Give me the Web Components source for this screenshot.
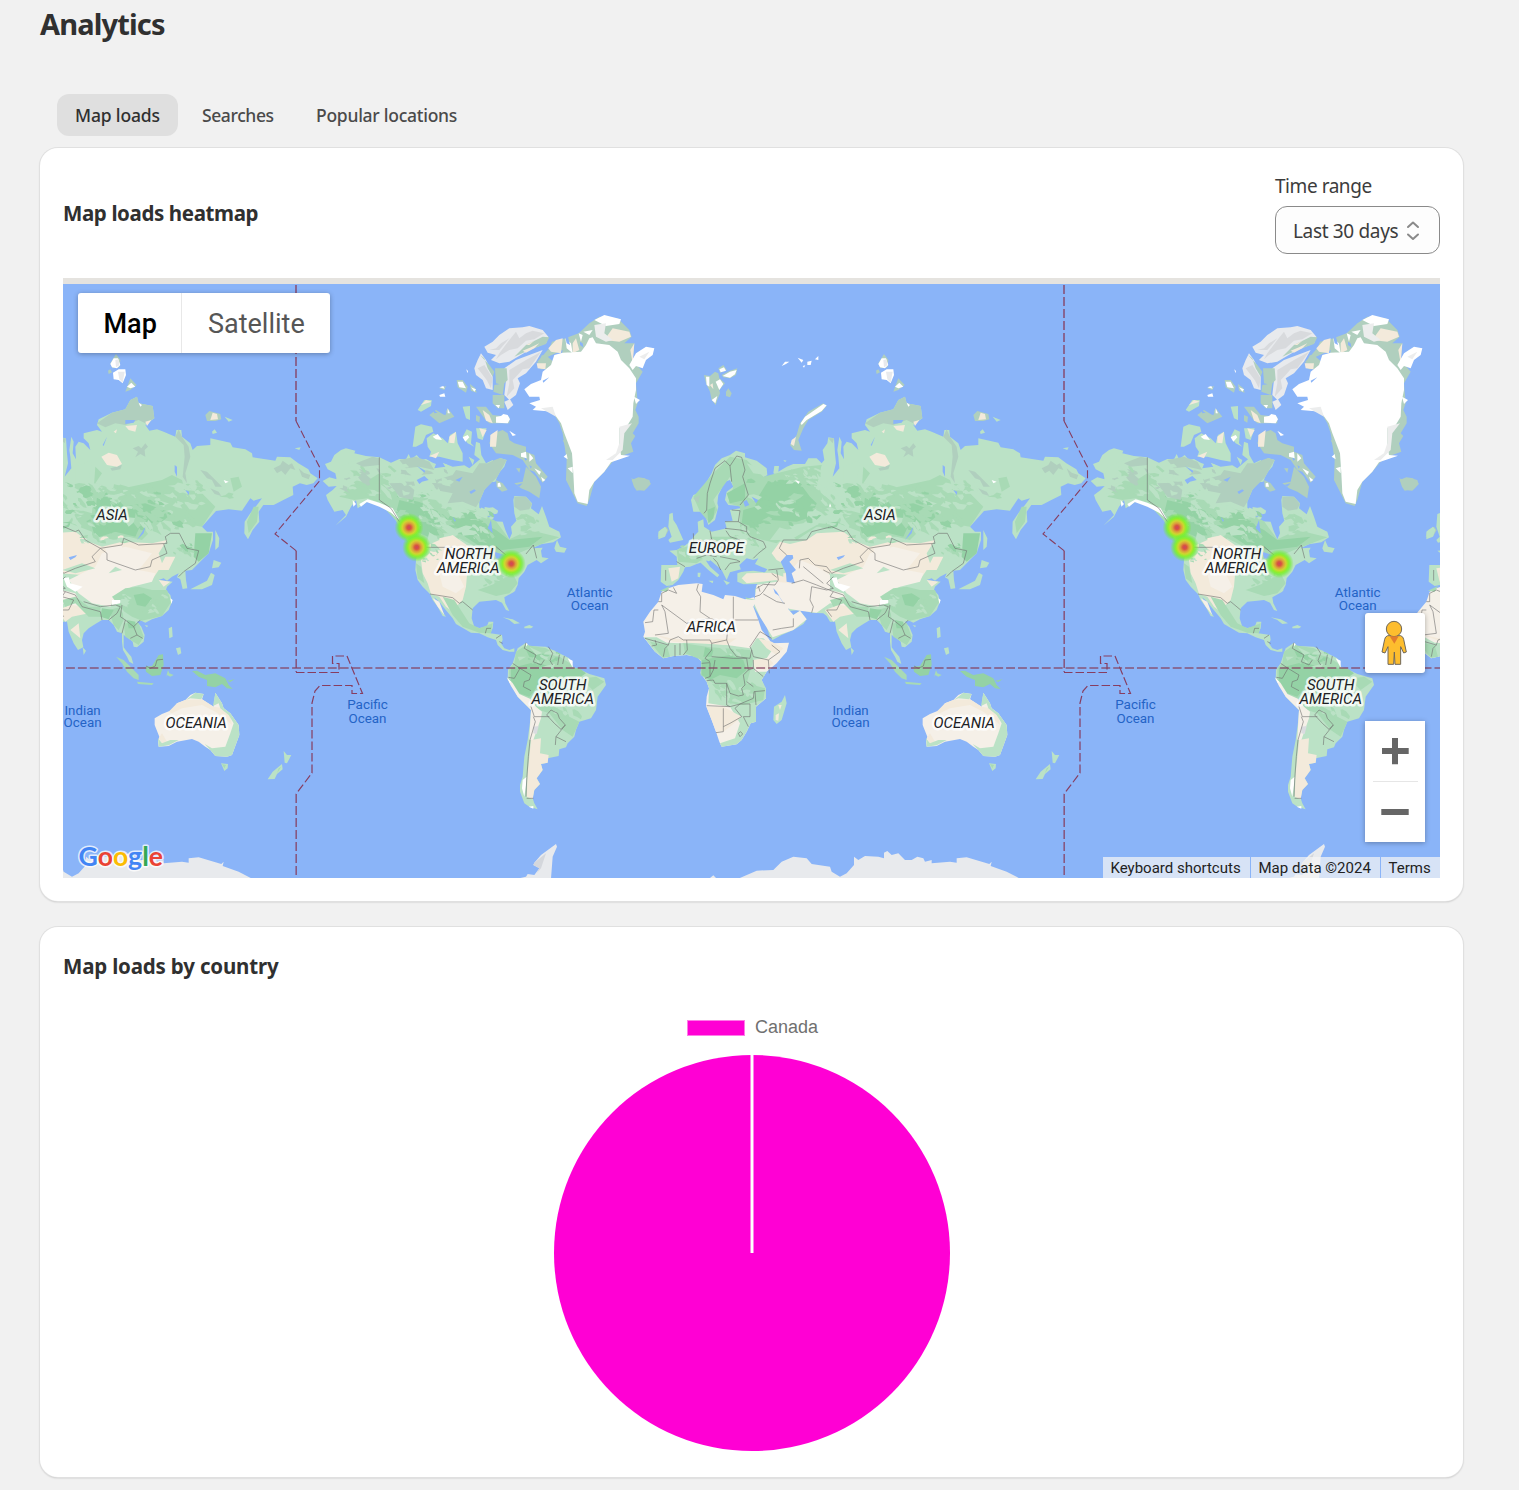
<!DOCTYPE html>
<html lang="en">
<head>
<meta charset="utf-8">
<title>Analytics</title>
<style>
html,body{margin:0;background:#f1f1f1}
body{width:1519px;height:1490px;overflow:hidden;font-family:"Noto Sans","Open Sans",sans-serif;color:#303030}
</style>
</head>
<body>
<analytics-page>
  <page-tabs slot="tabs">
    <page-tab selected style="--w:85px;--ls:-.16px">Map loads</page-tab>
    <page-tab style="--w:72px;--ls:-.4px">Searches</page-tab>
    <page-tab style="--w:142px;--ls:-.26px">Popular locations</page-tab>
  </page-tabs>
  <ui-card>
    <heat-header slot="header"></heat-header>
    <world-map></world-map>
  </ui-card>
  <ui-card>
    <card-title slot="header" style="--ls:-.18px">Map loads by country</card-title>
    <pie-chart label="Canada"></pie-chart>
  </ui-card>
</analytics-page>

<script>
function define(name, html) {
  const tpl = document.createElement('template');
  tpl.innerHTML = html;
  customElements.define(name, class extends HTMLElement {
    constructor() {
      super();
      this.attachShadow({mode: 'open'}).appendChild(tpl.content.cloneNode(true));
      const l = this.getAttribute('label'), t = this.shadowRoot.querySelector('[data-label]');
      if (l && t) t.textContent = l;
    }
  });
}

define('analytics-page', `<style>
:host{display:flex;flex-direction:column;padding:0 56px 0 40px;box-sizing:border-box;width:1519px}
h1{margin:0;height:94px;font-size:29px;font-weight:700;line-height:47px;letter-spacing:-.85px}
main{display:flex;flex-direction:column;gap:26px;margin-top:12px}
</style><h1>Analytics</h1><slot name="tabs"></slot><main><slot></slot></main>`);

define('page-tabs', `<style>:host{display:flex;gap:6px;padding-left:17px}</style><slot></slot>`);
define('page-tab', `<style>
:host{display:flex;align-items:center;height:42px;padding:0 18px;border-radius:12px;font-size:17.5px;font-weight:500;color:#4a4a4a;letter-spacing:var(--ls)}
:host([selected]){background:#dfdfdf;color:#303030}
span{width:var(--w);white-space:nowrap}
</style><span><slot></slot></span>`);

define('ui-card', `<style>
:host{display:flex;flex-direction:column;background:#fff;border-radius:18px;padding:23px;box-shadow:0 0 0 1px #e0e0e0,0 1px 2px #b8b8b8}
</style><slot name="header"></slot><slot></slot>`);

define('card-title', `<style>:host{display:block;font-size:20.5px;font-weight:700;line-height:33px;height:32px;letter-spacing:var(--ls)}</style><slot></slot>`);

define('select-box', `<style>
:host{display:flex;flex-direction:column;width:165px;font-size:19px;color:#3c3c3c}
label{line-height:31px;height:35px;letter-spacing:-.45px}
div{box-sizing:border-box;height:48px;border:1px solid #8a8a8a;border-radius:12px;background:#fdfdfd;display:flex;align-items:center;justify-content:space-between;padding:1px 19px 0 17px;letter-spacing:-.34px;white-space:nowrap}
</style><label>Time range</label><div><span><slot></slot></span><svg width="14" height="20" viewBox="0 0 14 20" fill="none" stroke="#8a8a8a" stroke-width="2" stroke-linecap="round" stroke-linejoin="round"><path d="M2 6 7 1.500l5 4.500M2 13.500l5 4.500 5-4.500"/></svg></div>`);

define('heat-header', `<style>:host{display:flex;justify-content:space-between;align-items:center;height:83px;margin-bottom:24px}</style><card-title style="--ls:-.38px">Map loads heatmap</card-title><select-box>Last 30 days</select-box>`);

define('pie-chart', `<style>
:host{display:flex;flex-direction:column;align-items:center;padding-top:33px}
.legend{display:flex;align-items:center;gap:10px;height:24px;padding-left:2px;font:18px "Liberation Sans",sans-serif;color:#707070}
i{width:56px;height:14px;background:#ff00d4;border:1px solid #ff7be8;margin-top:1px}
svg{display:block;margin-top:15px}
</style><div class="legend"><i></i><span data-label></span></div>
<svg width="398" height="400"><circle cx="199" cy="199" r="198" fill="#ff00d4"/><path d="M199 0V199" stroke="#fff" stroke-width="3"/></svg>`);

define('map-type', `<style>
:host{position:absolute;left:15px;top:15px;display:flex;height:60px;background:#fff;border-radius:3px;box-shadow:0 1px 5px rgba(0,0,0,.3);font:27px/63px Roboto,sans-serif;color:#565656}
b{font-weight:500;color:#000;width:104px;box-sizing:border-box;padding-left:25.500px;border-right:1px solid #e8e8e8}
span{width:148px;box-sizing:border-box;padding-left:26px}
</style><b>Map</b><span>Satellite</span>`);

define('map-pegman', `<style>
:host{position:absolute;left:1302px;top:335px;width:60px;height:60px;background:#fff;border-radius:3px;box-shadow:0 1px 5px rgba(0,0,0,.3)}
svg{display:block}
</style><svg width="60" height="60" viewBox="0 0 180 180"><g stroke="#70685a" stroke-width="3" stroke-linejoin="round"><path fill="#fdbd2e" d="M68 68q-8 3-9 11l-8 38 9 3 9-19V154h17l2-37 2 37h17V101l9 19 8-3-8-38q-1-8-9-11z"/><circle cx="87" cy="48" r="23" fill="#fdbd2e"/></g><path d="M74 70h27l-13 22z" fill="#e27c2d"/></svg>`);

define('map-zoom', `<style>
:host{position:absolute;left:1302px;top:443px;width:60px;height:121px;background:#fff;box-shadow:0 1px 5px rgba(0,0,0,.3)}
svg{display:block}
</style><svg width="60" height="121"><path d="M17 30H43.7M30 17V43.3M16.3 91H43.7" stroke="#666" stroke-width="6"/><path d="M8 60.500H53" stroke="#e6e6e6"/></svg>`);

define('map-credits', `<style>
:host{position:absolute;right:0;bottom:0;display:flex;gap:1px;height:21px;font:15px/22px Roboto,sans-serif;color:#222}
span{background:rgba(245,245,245,.72);box-sizing:border-box;padding-left:7.500px;white-space:nowrap}
</style><span style="width:147px">Keyboard shortcuts</span><span style="width:129px">Map data ©2024</span><span style="width:59px">Terms</span>`);

/* Terrain speckle: small irregular slivers with a fixed seed, kept inside inland boxes */
let seed = 7;
const rnd = () => (seed = (seed * 16807) % 2147483647) / 2147483647;
function speckle(n, x0, y0, x1, y1, classes, size) {
  let out = '';
  for (let i = 0; i < n; i++) {
    const cx = x0 + rnd() * (x1 - x0), cy = y0 + rnd() * (y1 - y0), s = size * (.4 + rnd());
    const tilt = rnd() * 1.2 - .2, pts = [];
    for (let k = 0; k < 8; k++) {
      const a = k * Math.PI / 4, r = s * (.35 + rnd());
      const x = Math.cos(a) * r, y = Math.sin(a) * r * .45;
      pts.push((cx + x * Math.cos(tilt) - y * Math.sin(tilt)).toFixed(1) + ' ' + (cy + x * Math.sin(tilt) + y * Math.cos(tilt)).toFixed(1));
    }
    out += `<path class="${classes[i % classes.length]}" d="M${pts.join(' ')}Z"/>`;
  }
  return out;
}

/* Palette: L light green, M mid green, D forest, G tundra, T tan, C cream, I ice shade, O ocean, B borders */
const world = `
<g transform="translate(296 300) scale(.33333)">
 <path class="L" d="M80 543 100 532 122 538 118 520 95 508 87 492 105 485 115 465 135 450 150 445 178 452 175 460 210 468 250 472 285 488 310 477 330 478 338 462 345 478 362 465 375 480 390 477 410 488 420 492 415 505 448 500 440 488 470 500 505 496 520 505 535 492 552 478 535 465 540 425 552 430 556 465 570 490 590 480 600 500 612 474 632 480 625 500 612 515 603 532 598 545 582 547 565 570 550 605 550 625 562 655 590 664 620 665 628 690 640 718 648 700 645 680 661 662 655 640 652 600 655 588 690 590 708 610 705 625 728 643 738 618 750 650 760 680 790 695 795 712 772 727 735 733 710 745 740 743 735 752 738 772 758 775 735 790 722 780 695 795 685 815 668 835 665 855 655 875 625 892 628 910 640 933 630 930 618 908 600 900 580 902 550 905 530 925 527 955 535 980 550 984 572 980 578 965 592 965 590 985 583 1000 618 1005 620 1020 615 1030 625 1045 640 1050 655 1045 655 1055 640 1055 620 1050 605 1035 600 1020 575 1012 550 1000 525 998 480 972 470 955 445 925 430 905 415 892 432 925 450 950 440 948 425 920 410 900 402 882 380 860 365 840 358 810 360 780 365 760 345 740 330 700 300 662 285 640 250 608 215 605 185 625 180 600 165 620 150 650 118 677 150 645 140 630 115 635 95 600 90 585 110 570 122 558 98 560Z"/>
 <path class="M" d="M130 590 165 555 210 545 250 520 300 560 350 590 420 600 470 620 550 635 600 664 640 718 700 690 790 712 735 733 690 750 600 790 560 750 460 700 400 700 380 770 345 740 300 662 250 608 215 595 175 600Z"/>
 <path class="D" d="M310 600 390 620 470 650 540 660 600 690 640 720 740 710 700 740 620 750 560 745 500 705 410 670 395 710 350 690 300 640Z"/>
 <path class="L" d="M420 600 500 620 560 655 520 660 460 640ZM130 500 180 480 240 500 190 515 150 560 120 545ZM540 830 640 810 600 850 660 870 620 890 550 895Z"/>
 ${speckle(34, 140, 500, 290, 590, ['L','M','L','G'], 17)}
 ${speckle(50, 300, 560, 420, 690, ['M','L','D','M'], 16)}
 ${speckle(56, 400, 620, 590, 720, ['M','L','D','L'], 20)}
 ${speckle(16, 670, 650, 735, 700, ['L','M'], 16)}
 ${speckle(30, 560, 790, 640, 880, ['M','L'], 16)}
 <path class="G" d="M420 540 470 525 480 510 530 520 550 490 575 490 590 482 612 474 632 480 603 532 565 570 550 605 540 622 500 605 455 610 470 580 430 572ZM180 490 230 470 250 475 250 495 200 500ZM280 550 330 548 355 570 350 600 310 590ZM655 590 690 590 708 612 700 628 672 632 655 620ZM310 480 360 470 400 485 415 510 370 500 330 505Z"/>
 ${speckle(22, 320, 495, 460, 590, ['L','G','L'], 16)}
 <path class="T" d="M385 740 430 720 470 705 520 740 510 860 500 900 480 920 510 965 490 950 450 920 430 890 405 882 395 850 380 820 375 780 400 760 420 745ZM430 715 460 708 490 730 470 755 430 740Z"/>
 ${speckle(18, 380, 740, 430, 800, ['M','T','L'], 12)}
 <path class="C" d="M430 820 480 810 505 860 480 880 440 860ZM410 895 430 905 445 945 425 920Z"/>
 <path class="M" d="M440 890 475 900 520 970 550 985 590 970 585 1000 550 998 500 980 470 945ZM360 790 375 800 385 850 365 835ZM545 870 600 850 650 820 665 850 640 880 600 888Z"/>
 <path fill="#fff" d="M190 612 215 598 250 608 290 625 310 660 285 638 250 620 212 606 195 620ZM170 600 180 612 172 620Z"/>
 <path class="O" d="M362 540 385 528 398 540 378 545 370 552ZM363 498 388 512 385 518ZM520 575 535 568 540 572 525 582ZM478 540 500 530 490 545ZM575 685 585 660 590 700ZM470 650 480 662 476 665ZM595 755 625 765 640 780 600 775Z"/>
 <path class="L" d="M350 440 358 380 375 373 408 380 412 395 390 405 380 430 360 440ZM392 415 412 400 440 415 455 430 462 405 480 395 485 430 500 460 500 485 470 480 430 470 400 470 405 455 395 440ZM500 410 512 388 528 395 525 430 535 440 515 430ZM518 470 535 480 530 495ZM540 385 572 385 560 420 545 415ZM500 320 522 318 522 360 510 355ZM775 745 783 720 792 740 812 745 805 758 780 755ZM365 330 385 300 407 300 405 318 375 335Z"/>
 <path class="G" d="M580 430 590 400 605 395 620 390 635 400 640 420 655 430 690 440 690 455 715 465 720 490 755 530 740 548 715 515 700 510 680 480 650 465 600 460ZM655 550 680 545 690 500 720 530 735 560 730 595 700 575 675 565ZM400 345 420 330 445 345 455 325 475 350 430 370ZM600 540 620 550 635 570 618 575 602 560ZM660 505 673 505 670 518ZM540 320 570 320 590 345 640 350 640 370 580 370 565 355ZM482 240 500 240 515 260 510 278 485 262ZM522 252 538 265 542 278 525 272ZM430 265 450 258 445 270ZM540 345 552 350 550 368 540 362ZM800 420 815 425 810 442ZM590 285 625 285 625 325 605 325 590 310Z"/>
 <path class="O" d="M440 340 452 335 448 346ZM412 330 425 338 415 340ZM684 470 694 478 688 482ZM700 495 708 500 704 506ZM660 555 680 550 670 560Z"/>
 <path class="T" d="M582 440 583 405 605 390 600 440ZM460 410 480 395 475 430 460 428ZM550 385 572 390 560 412ZM400 468 430 455 420 475ZM375 315 390 300 407 305ZM560 330 580 345 590 370 570 362Z"/>
 <path fill="#fff" d="M600 350 615 348 622 342 635 345 642 358 635 370 600 368ZM675 460 690 455 692 475 675 470ZM700 460 712 475 700 485ZM715 505 735 515 730 525ZM735 530 748 540 740 545ZM640 392 660 405 650 408ZM455 325 462 340 455 340ZM598 315 612 315 608 325ZM410 410 425 402 438 420 420 418ZM500 412 515 405 520 412 508 425ZM485 245 500 245 510 265 490 262ZM525 262 540 268 535 275ZM430 262 442 258 446 266ZM430 285 445 280 448 290 432 290ZM605 550 612 548 615 560 605 560ZM511 208 516 213 514 220Z"/>
 <path class="I" d="M565 140 590 125 610 105 640 85 680 82 700 78 740 90 757 110 750 130 700 150 640 185 610 190 585 180 600 165 575 158ZM535 205 545 180 555 160 570 180 590 220 590 270 570 265 560 240 540 225ZM630 240 625 205 660 180 700 165 740 150 720 185 690 220 665 235 672 250 660 285 640 300 625 285ZM625 305 642 298 652 315 635 330Z"/>
 <path fill="#d8dadd" d="M580 150 600 145 615 130 640 115 610 150ZM640 120 660 95 670 115 690 100 710 92 745 100 715 118 690 122 665 145 640 150 615 165 600 178 610 160ZM545 205 565 195 578 215 590 235 585 265 572 240ZM640 210 665 195 690 180 735 155 700 205 680 208 665 225 650 240 655 265 632 290 640 250Z"/>
 <path class="G" d="M655 170 690 135 740 110 760 112 750 132 700 150ZM552 165 565 175 575 205 590 230 595 215 580 195ZM597 205 632 205 635 240 620 255 600 250ZM595 255 625 250 620 285 592 275Z"/>
 <path class="T" d="M680 152 705 142 730 130 715 145 690 158ZM690 135 715 122 700 135Z"/>
 <path class="G" d="M848 100 880 70 910 50 965 55 1000 90 1007 110 985 130 1015 130 1010 180 1040 215 1020 250 1025 310 1018 330 1028 350 1028 370 1010 400 1018 408 1005 430 1012 455 985 465 950 485 925 515 895 545 880 600 872 618 845 610 830 580 810 540 812 480 800 400 790 370 770 335 800 150 735 180 720 190 755 150 760 145 768 125 800 118ZM722 195 738 165 755 170 772 185 760 207 735 208Z"/>
 <path class="T" d="M757 145 780 120 800 115 795 160 765 155ZM830 130 840 115 850 150 830 160ZM722 190 750 190 748 208 725 205ZM925 120 950 85 1000 95 1005 110 970 125ZM1003 150 1015 130 1010 190Z"/>
 <path fill="#fff" d="M685 268 705 252 735 240 740 215 765 195 775 165 800 158 855 155 870 135 880 115 890 112 900 130 940 135 965 155 975 180 1000 205 1020 235 1020 270 1012 310 1010 350 995 375 970 385 970 430 975 465 1002 467 945 487 925 515 895 545 880 570 875 612 845 605 835 580 832 520 828 460 805 400 795 370 770 335 710 330 720 320 700 310 732 300 730 290 700 290ZM895 60 925 45 975 58 970 72 930 78ZM1000 195 1020 160 1050 140 1075 145 1070 165 1050 180 1040 205 1020 198 1010 210ZM808 115 825 130 830 160 812 145ZM848 100 860 105 855 125ZM862 95 890 90 880 105ZM815 505 830 500 830 520ZM1014 290 1032 300 1020 312ZM803 470 812 462 815 478Z"/>
 <path class="O" d="M808 112 816 110 822 135 812 130ZM852 125 860 130 862 142 852 135ZM740 242 760 232 742 248Z"/>
 <path fill="#eceded" d="M970 380 1008 370 985 400 980 450 950 480 930 480 960 460 970 430ZM895 75 930 70 925 100 950 120 930 125 900 110ZM1030 170 1060 155 1045 178ZM735 325 770 320 780 350Z"/>
 <path class="G" d="M1005 535 1020 540 1035 533 1060 540 1064 553 1045 572 1020 570 1022 555ZM1085 710 1092 690 1110 680 1118 690 1108 708Z"/>
 <path class="I" d="M1025 550 1040 542 1055 552 1040 562Z"/>
 <path class="B" d="M250 472V600M250 600 285 625 310 665M385 742H470M690 762 712 735 722 775M600 740 630 765M402 882 470 893 490 910 500 905 530 930M568 1000 572 985 585 985M600 1015 615 1005M610 1025 620 1030"/>
 <path class="L" d="M620 952 650 958 672 970 655 972 640 960ZM685 980 700 975 712 980 705 985 685 985Z"/>
</g>
<g transform="translate(296 540) scale(.33333)">
 <path class="L" d="M658 345 665 325 690 308 700 318 750 320 790 340 820 355 830 380 855 390 880 402 925 415 930 435 905 470 900 510 885 535 850 545 840 570 835 590 815 610 810 622 790 628 788 648 755 655 755 668 735 672 740 690 722 715 732 732 715 750 710 775 715 790 725 808 700 800 685 790 672 755 672 735 680 710 685 650 695 600 703 540 705 510 690 495 665 470 650 440 635 420 636 390 650 370Z"/>
 <path class="M" d="M660 335 690 315 750 325 830 375 830 420 900 410 925 425 890 450 870 430 850 460 800 480 820 530 850 545 830 590 800 570 760 520 700 500 640 420 640 385 655 370Z"/>
 <path class="D" d="M645 385 720 365 760 380 850 385 870 400 840 420 740 420 700 470 670 460 645 420ZM690 330 760 345 740 365 700 350Z"/>
 <path class="L" d="M700 320 740 340 720 345ZM740 380 780 370 770 385ZM665 350 690 350 670 362Z"/>
 ${speckle(34, 760, 430, 880, 530, ['L','M','L'], 16)}
 ${speckle(14, 680, 340, 790, 370, ['M','L','D'], 13)}
 <path class="L" d="M730 540 760 530 790 560 780 620 770 648 740 640 728 600Z"/>
 <path class="C" d="M632 412 650 430 670 462 705 478 720 500 738 515 735 535 712 600 700 600 703 540 705 510 690 495 665 470 645 438Z"/>
 <path class="T" d="M705 600 735 595 732 640 758 645 755 668 735 672 740 690 722 715 732 732 715 750 710 778 692 770 695 700ZM702 480 735 485 735 500Z"/>
 <path fill="#fff" d="M680 720 692 710 690 735 685 770 678 745ZM698 800 712 798 712 806ZM690 308 695 312 690 320ZM815 355 830 362 830 383ZM635 415 645 425 642 430Z"/>
 <path fill="#dadce0" d="M712 560 728 558 722 582 712 580Z"/>
 <path class="B" d="M650 370 672 385 655 415 637 412M690 308 685 325 720 345 712 365 735 375 745 360M757 320 770 340 762 362 770 375M790 345 785 375M805 348 800 372M672 385 705 405 700 420 685 425 682 440 705 452M705 478 705 500 715 530 760 530M752 525 765 510 785 520 790 535 808 555 795 568 775 550ZM808 555 780 590 778 615M780 590 810 605M712 530 718 545 702 600 697 650 692 720 690 770M692 775H712"/>
 <path class="I" d="M665 1016 690 1010 695 1002 715 1005 730 985 712 975 715 968 735 945 780 912 783 920 770 950 765 1016Z"/>
 <path fill="#d4d7dc" d="M712 975 715 968 750 940 735 985 722 1000 730 985Z"/>
</g>
<g transform="translate(630 340) scale(.33333)">
 <path class="L" d="M183 480 190 465 215 455 230 425 245 400 255 375 275 355 300 345 318 332 345 340 345 352 380 362 410 385 412 405 395 415 370 408 385 430 405 432 405 420 435 415 440 405 430 400 433 378 447 378 445 395 470 380 490 372 525 372 535 355 560 355 575 370 583 360 578 330 592 310 595 292 612 295 615 340 618 370 608 410 628 385 625 350 622 330 628 290 635 305 632 340 642 358 640 320 650 305 665 310 685 330 680 310 665 295 665 280 705 270 720 275 705 255 710 238 750 218 790 208 805 180 825 170 830 190 872 198 877 235 850 255 862 272 885 268 905 275 940 290 943 270 958 270 960 290 985 310 992 330 1005 318 1045 315 1045 295 1105 308 1112 322 1150 328 1170 340 1172 352 1240 362 1245 350 1285 352 1309 370 1339 388 1345 400 1367 415 1354 430 1334 435 1314 430 1292 440 1294 465 1264 480 1235 495 1204 495 1190 515 1192 545 1172 570 1158 598 1147 580 1148 545 1165 520 1185 495 1200 475 1175 482 1165 475 1140 512 1100 508 1062 513 1020 560 1035 575 1053 575 1053 600 1040 640 1010 670 990 690 970 692 972 720 976 745 962 747 955 718 945 712 950 700 930 710 915 722 905 715 890 720 932 725 915 740 912 750 925 765 930 785 920 810 900 828 870 838 850 848 838 842 825 845 838 860 848 885 845 905 825 922 815 920 812 905 800 895 785 885 785 922 795 935 808 950 814 972 802 965 795 950 783 930 780 905 780 880 765 875 755 855 740 840 720 840 700 852 680 865 665 880 660 900 664 922 648 930 635 910 620 875 615 845 600 845 590 828 580 820 545 818 515 810 480 812 465 790 450 770 440 750 430 750 435 770 455 790 470 805 490 825 510 812 530 838 520 852 490 870 455 885 428 900 420 892 410 860 390 830 372 800 378 770 375 750 382 732 340 733 322 725 322 700 345 692 345 685 325 690 300 697 290 720 275 690 250 668 240 660 228 662 240 680 268 705 262 712 235 690 212 668 200 672 180 680 165 682 160 695 145 720 128 735 110 738 92 725 94 675 142 675 140 650 118 632 140 630 160 620 180 605 195 585 205 575 203 545 220 538 222 560 245 575 290 565 285 545 308 542 300 510 330 505 345 480 330 498 295 495 285 480 290 455 310 440 300 420 285 425 265 465 262 490 265 500 255 540 235 555 225 525 210 515 190 515Z"/>
 <path class="M" d="M190 470 250 400 300 350 350 360 400 410 440 400 520 380 575 375 560 440 620 500 690 520 700 380 720 400 700 430 760 450 900 420 930 405 960 420 975 470 1020 460 1060 500 1020 560 900 540 840 600 800 590 700 590 640 560 560 560 500 600 480 580 440 610 360 590 330 560 330 500 295 490 310 440 300 410 250 480 262 510 240 550 210 515ZM140 630 200 610 240 640 200 670 145 665ZM240 590 330 590 300 640 250 630ZM1175 500 1190 500 1185 545 1160 580 1155 545ZM1105 415 1130 410 1140 440 1115 455Z"/>
 <path class="D" d="M385 470 410 430 470 420 510 430 540 470 560 490 545 530 500 545 420 540 370 560 335 550 340 510 375 500ZM705 470 740 455 780 500 850 490 930 520 900 545 840 545 820 590 760 575 700 595 690 560 730 550 700 520ZM1000 580 1050 580 1040 640 1010 665 995 650ZM290 460 345 430 345 480 300 490ZM232 510 255 500 250 535 235 550Z"/>
 <path class="L" d="M450 560 520 550 560 520 600 500 640 520 620 545 560 555 480 600 420 600ZM640 380 690 360 680 420 640 450ZM560 400 600 430 600 480 575 460ZM740 480 780 470 770 495ZM540 535 600 540 690 575 690 590 620 560ZM780 530 830 535 800 560ZM350 370 390 385 405 405 370 400Z"/>
 ${speckle(60, 540, 430, 720, 560, ['L','M','D','L'], 18)}
 ${speckle(64, 720, 450, 1000, 570, ['M','D','M','L'], 20)}
 ${speckle(34, 360, 420, 550, 560, ['D','M','D','L'], 17)}
 ${speckle(30, 470, 385, 570, 430, ['L','M'], 12)}
 ${speckle(30, 690, 440, 930, 475, ['M','L','M'], 18)}
 ${speckle(30, 930, 420, 1130, 490, ['L','M','L'], 18)}
 ${speckle(22, 150, 620, 240, 660, ['L','M'], 12)}
 ${speckle(26, 300, 570, 400, 630, ['L','M','L'], 14)}
 ${speckle(16, 925, 600, 990, 660, ['M','L','D'], 14)}
 <path class="G" d="M705 250 750 218 790 208 805 180 825 170 830 190 872 198 877 235 850 250 830 240 790 255 760 250 730 262ZM940 290 950 268 960 290 980 320 985 350 970 400 975 430 962 410 968 350 965 315ZM812 325 830 318 838 325 850 310 858 320 848 330 850 350 835 342 820 352 828 335ZM1015 390 1035 395 1055 415 1080 440 1060 440 1050 420 1035 415ZM1235 385 1255 375 1262 362 1280 375 1290 370 1300 390 1285 385 1270 405 1258 392 1245 400ZM745 385 780 375 775 388 750 392ZM190 475 210 465 205 490ZM595 295 612 295 608 310ZM1310 385 1325 398 1345 405 1340 418 1320 410ZM1045 445 1070 455 1078 468 1058 462Z"/>
 <path class="T" d="M718 350 740 338 765 345 780 372 765 380 735 375ZM790 258 825 255 820 275 800 270ZM850 245 868 240 855 258ZM755 275 765 268 762 280ZM425 640 450 605 480 612 530 600 560 580 640 575 680 605 720 620 780 605 870 610 915 600 890 640 900 670 910 650 940 650 920 690 890 690 870 720 810 735 740 700 660 705 600 700 560 760 540 800 450 740 440 720 350 730 335 715 350 700 420 698 470 700 495 690 440 660ZM585 810 640 790 680 820 630 830 610 845ZM625 870 650 850 655 895ZM115 685 150 680 145 715 125 725ZM890 720 925 725 905 740Z"/>
 <path class="C" d="M475 700 510 660 560 680 600 705 600 750 640 760 660 800 600 790 560 818 510 812 470 805 455 780 435 750 460 790 490 825 510 812 530 838 490 870 428 892 390 830 372 790 380 735 440 725 480 730ZM620 720 700 680 720 640 790 620 870 640 830 690 880 700 870 725 810 740 790 750 750 790 745 800 690 790 650 760ZM730 625 780 615 780 650 735 650Z"/>
 ${speckle(14, 660, 590, 800, 612, ['L','M','T'], 14)}
 <path class="L" d="M600 690 660 670 700 685 640 700ZM740 700 780 690 760 680ZM405 665 460 690 460 710 430 700 390 685Z"/>
 <path class="M" d="M750 770 790 745 830 740 870 750 915 750 928 785 900 828 840 842 810 830 780 810ZM600 780 640 770 680 800 715 800 715 830 680 830 640 790 610 800ZM740 810 780 800 785 840 770 870 755 855ZM785 850 830 850 845 890 830 915 790 890Z"/>
 ${speckle(22, 770, 765, 910, 820, ['L','M','L','M'], 15)}
 <path class="D" d="M815 765 845 760 870 775 850 800 825 795ZM720 805 755 810 740 838 715 830ZM795 840 820 845 820 865 800 865Z"/>
 <path fill="#fff" d="M605 715 620 712 625 730 662 740 640 755 615 740ZM750 780 775 780 775 790 750 795ZM925 775 932 780 928 792ZM830 188 840 195 835 200ZM495 420 510 425 505 432ZM600 490 604 500 597 500ZM1085 420 1100 425 1090 430Z"/>
 <path class="O" d="M328 675 350 655 370 660 385 655 375 672 412 688 405 697 370 692 335 695ZM452 665 470 645 488 645 490 655 478 665 498 690 485 700 495 730 470 725 468 700ZM620 652 645 645 640 652 625 660ZM825 600 850 560 845 580ZM340 485 350 480 358 495 345 500ZM790 240 820 240 815 248 790 252ZM735 290 725 318 722 315ZM938 375 945 380 945 410 938 395ZM365 470 385 480 378 490ZM970 450 982 455 980 465ZM430 745 440 755 448 768 435 760Z"/>
 <path class="L" d="M118 522 128 518 130 540 140 555 160 600 120 608 115 600 125 590 115 560ZM85 575 105 560 112 570 105 590 85 598ZM203 698 212 698 210 712 203 710ZM235 722 250 722 248 730ZM1060 570 1072 595 1070 620 1060 630ZM1055 660 1078 668 1070 682 1050 685ZM1047 698 1058 705 1050 735 1020 748 985 748 1010 735 1035 722ZM1050 275 1058 268 1065 278 1052 282ZM1088 230 1112 240 1100 245ZM460 360 470 362 465 366ZM1298 325 1316 322 1312 330ZM920 865 930 860 932 890 922 895ZM942 925 955 922 958 940 948 945ZM662 922 672 932 665 945ZM848 855 858 857 855 862ZM280 720 300 728 290 735Z"/>
 <path class="G" d="M5 420 25 412 45 415 62 430 50 445 20 452 12 440ZM1030 225 1042 213 1075 222 1078 238 1060 243 1035 243Z"/>
 <path class="T" d="M1045 240 1052 218 1065 222 1068 238Z"/>
 <path class="G" d="M480 315 500 285 510 250 535 215 580 190 590 198 575 215 535 240 520 265 505 300 515 332 492 330ZM222 105 240 108 255 95 265 100 268 115 285 130 268 150 270 160 262 180 257 195 245 180 240 155 235 145 228 130ZM265 85 280 75 290 90 270 98ZM288 155 295 145 305 160 300 172 288 168ZM275 105 300 92 322 85 318 105 300 115 280 112ZM745 70 762 42 775 60 772 82 752 85ZM738 92 745 88 750 97 740 102ZM790 155 805 115 824 135 805 150Z"/>
 <path fill="#fff" d="M512 250 525 230 580 192 590 196 575 213 530 240 515 255ZM278 108 300 95 320 90 315 103 300 113ZM257 125 270 118 280 132 268 150ZM228 110 238 110 238 140 230 135ZM245 180 262 168 256 190ZM268 88 282 82 288 92 272 97ZM745 72 755 55 768 55 775 75 765 85 750 82ZM753 98 770 88 790 88 792 105 782 130 770 120 755 118ZM795 140 808 128 820 140 805 145ZM455 78 465 65 478 65 468 72ZM503 53 520 60 515 68ZM532 65 545 62 542 75 532 75ZM555 58 565 48 565 60ZM518 78 526 76 522 83Z"/>
 <path fill="#e8eaed" d="M768 95 788 95 782 128 772 118ZM760 60 770 58 772 76 762 82Z"/>
 <path class="T" d="M485 300 498 290 492 318 482 312ZM240 135 248 130 250 148Z"/>
 <path class="B" d="M255 385 285 362 300 378 305 425M300 378 320 348 335 352 345 390 338 410 355 465 330 495M255 385 240 430 232 460 230 510 222 520M190 580 192 620M240 572 245 598 225 605 205 600 195 625M245 598 265 610M285 545H325M305 510 330 512 325 545 350 560 350 575M285 565 330 570 350 575 360 590 400 605 408 622 385 640 370 655M288 572 300 590 330 600 320 640M250 655 262 668 272 690M270 650 320 660 330 665 300 670 285 690M200 655 230 645 260 650M140 665 165 680M448 625 460 600 530 600 545 575 605 560 640 575 650 570 670 600 715 625 780 615 785 595 830 615 915 610 910 590 925 580 952 580 975 625 1010 632 1000 670 965 695 950 710M448 625 470 645M508 685 510 660 535 655 555 675 590 680 605 700 640 685 700 665 690 650 715 625 735 640 735 660 820 690 865 680 870 660 915 640 905 612M485 730 520 720 560 735 610 755 640 765M520 680 580 730M580 690 600 700M610 710 590 730 610 745 590 750 545 740 540 780 550 800 545 818M610 755 600 770 635 780 620 810 590 810 605 830M640 765 660 800 715 815 720 840M665 785 715 800 760 795 775 800 765 820 740 840M780 795 775 830 790 840 780 880M790 840 815 860 835 840M815 860 825 885 805 895M825 885 842 895M440 690 445 720 435 735 400 733 380 745M385 738 390 755M375 770 390 765 400 755 420 725M400 762 440 785 465 790M428 870 455 865 490 860 490 835M415 690 460 685M425 700 440 712M107 690V722"/>
</g>
<g transform="translate(630 560) scale(.33333)">
 <path class="C" d="M40 230 45 215 40 185 60 155 85 125 95 95 115 85 145 75 200 70 218 72 215 95 250 105 280 118 285 105 315 108 345 118 372 112 378 125 370 140 385 180 395 210 415 235 425 250 477 248 470 275 440 310 410 335 395 360 405 385 408 415 378 440 378 485 362 490 350 515 335 540 320 553 275 560 268 545 258 515 245 480 228 438 230 410 237 385 230 365 212 340 215 305 200 290 170 285 130 288 100 295 75 275 55 250Z"/>
 <path class="L" d="M42 232 80 232 110 248 150 250 200 245 240 250 290 255 360 265 380 235 400 235 430 265 410 295 370 300 375 335 410 335 395 360 408 385 408 415 378 440 378 485 362 490 350 515 335 540 320 553 275 560 270 550 315 535 330 490 300 440 235 430 237 385 230 365 212 340 215 305 200 290 170 285 130 288 100 295 75 275Z"/>
 <path class="M" d="M60 245 110 255 120 290 98 293ZM160 250 240 262 360 270 370 300 350 370 405 385 400 420 340 435 300 430 300 395 250 370 212 345 215 300 165 280Z"/>
 <path class="D" d="M215 300 300 285 340 300 350 330 320 355 270 345 240 360 215 345ZM225 262 250 270 245 290 220 290Z"/>
 ${speckle(24, 250, 370, 380, 425, ['M','L','M'], 15)}
 ${speckle(10, 270, 265, 340, 285, ['L','M'], 12)}
 <path class="T" d="M60 220 120 235 200 240 320 235 290 255 200 250 130 245ZM230 440 280 440 335 470 300 500 280 515 258 515ZM370 300 415 295 430 310 405 330 375 325ZM385 235 425 245 460 265 440 285 410 265Z"/>
 <path class="M" d="M90 92 120 78 110 95ZM378 120 345 112 350 118Z"/>
 <path class="L" d="M465 405 470 430 455 480 440 492 430 480 432 440 455 425Z"/><path class="T" d="M445 435 455 435 450 450ZM437 465 447 460 445 482 437 480Z"/>
 <path class="B" d="M85 125H95V100L115 90 140 100 130 82M95 135 170 190 240 175 210 155 212 110 200 90 205 72M95 135 105 155 115 220 75 225M45 188 68 185 72 150H85M310 110V180H385M240 175 255 180 295 190 290 240 245 250 240 240 160 240 145 230 120 240 115 255 45 235M170 240 172 270 160 285M135 255V290M150 250V285M115 255 105 265 100 290M75 240 80 255 65 258M245 250 245 270 225 295 240 305M290 240 300 265 320 290 360 295 365 270 360 260 390 215 425 235M365 270 370 290 415 300 450 275 425 255M415 300 418 340M245 290 310 295 350 295 355 330 340 345 345 375 335 385 340 405 325 408 300 400 290 370 255 370 250 360 230 362M215 310 240 308V350L225 355M255 300 250 330 240 350M290 370V435L300 440 230 437M300 440 330 432 370 415 372 395 405 392M375 395 378 435M280 445V500L300 490 335 470 315 445 330 432 360 432 360 470 340 470 355 500M370 325 400 350M355 330 370 325 370 300M350 365 370 380M325 520 332 515 338 522 330 530ZM258 518 280 515 280 500"/>
 <path class="C" d="M878 475 900 462 930 450 945 430 970 420 985 405 1000 398 1025 402 1020 418 1055 440 1060 398 1080 430 1085 445 1105 460 1130 495 1132 525 1110 585 1095 590 1060 588 1045 570 1030 560 1010 545 990 537 945 545 920 558 890 560 888 545 892 530 878 495Z"/>
 <path class="T" d="M920 455 945 430 970 420 1020 418 1055 440 1085 445 1105 465 1110 495 1095 480 1060 455 1020 435 960 445 930 460ZM890 535 900 520 915 545 950 540 905 555Z"/>
 <path class="L" d="M972 420 1000 398 1025 402 1018 418 985 415ZM1053 438 1060 398 1080 430 1085 445 1105 460 1130 495 1132 525 1110 585 1095 590 1060 588 1045 570 1028 552 1050 565 1090 560 1105 520 1115 490 1100 465 1075 445 1070 430ZM890 560 888 535 900 550 925 540 950 540 920 556Z"/>
 <path class="L" d="M1077 610 1098 612 1097 625 1087 633ZM1265 573 1275 585 1288 585 1275 610 1268 608ZM1250 620 1260 612 1262 628 1245 642 1238 657 1217 658 1232 635Z"/>
 <path class="M" d="M762 290 785 300 810 325 830 345 830 360 815 355 795 335 780 310ZM825 365 875 370 870 375 828 372ZM912 352 918 330 922 340 935 345 925 350 915 345ZM1250 625 1258 620 1245 640ZM1080 612 1092 615 1087 625Z"/>
 <path class="D" d="M850 320 870 318 890 285 903 283 905 315 895 345 870 348 852 335ZM990 333 1005 332 1030 345 1060 340 1090 355 1100 375 1112 387 1095 385 1080 372 1060 382 1035 378 1035 360 1010 350ZM1095 362 1118 358 1105 366Z"/>
 <path class="B" d="M852 318 865 325 880 318 885 300 903 298"/>
 <path class="I" d="M325 956 380 932 430 930 455 905 490 890 530 895 545 912 600 920 605 935 630 950 650 940 672 915 672 890 685 900 705 888 745 890 762 895 762 878 772 873 785 885 805 880 825 900 845 900 862 890 880 895 885 905 905 900 905 910 960 905 980 908 980 895 1010 892 1078 912 1085 905 1082 918 1130 935 1170 956ZM240 954 250 946 258 954Z"/>
</g>`;

/* Each label: class, x centres of its copies, then its lines as [text, baseline, width, x offset] */
const labels = [
  ['n',[112,880],[['ASIA',520.3,31.7,0]]],
  ['n',[468.7,1236.7],[['NORTH',558.7,48.6,.3],['AMERICA',572.5,62.5,-.4]]],
  ['n',[716.3],[['EUROPE',553.3,55,0]]],
  ['n',[711.3],[['AFRICA',632.4,49.3,0]]],
  ['n',[562.7,1330.7],[['SOUTH',690.3,47.6,0],['AMERICA',704.3,62.5,0]]],
  ['n',[196.2,964.2],[['OCEANIA',728,61.3,0]]],
  ['s',[589.7,1357.7],[['Atlantic',597.2,45.8,0],['Ocean',610.4,38,0]]],
  ['s',[367.5,1135.500],[['Pacific',709.4,40.7,0],['Ocean',723,38,0]]],
  ['s',[82.6,850.6],[['Indian',714.7,36.2,0],['Ocean',727.3,38,0]]]
];
const labelSvg = labels.map(([cls, xs, lines]) => xs.map(x => `<text class="${cls}">` + lines.map(([t,y,w,dx]) =>
  `<tspan x="${x + dx - w/2}" y="${y}" textLength="${w}" lengthAdjust="spacingAndGlyphs">${t}</tspan>`).join('') + '</text>').join('')).join('');
const heat = [[409,527.500],[416.700,547.300],[511.300,563.700]].flatMap(([x,y]) => [0,768].map(d =>
  `<circle cx="${x+d}" cy="${y}" r="14.500" fill="url(#heat)"/>`)).join('');

define('world-map', `<style>
:host{display:block;position:relative;width:1377px;height:600px;overflow:hidden}
svg{display:block}
.L{fill:#bbe2c6}.M{fill:#a8dab5}.D{fill:#94d2a5}.G{fill:#b0cfbe}.T{fill:#f3eadb}.C{fill:#f5f0e8}.I{fill:#e8eaed}.O{fill:#8ab4f8}
.B{fill:none;stroke:#6c6c6c;stroke-opacity:.8;stroke-width:2.2;stroke-linejoin:round}
.n{font:italic 15.5px Roboto,sans-serif;fill:#202124;stroke:#fff;stroke-opacity:.8;stroke-width:5px;paint-order:stroke;stroke-linejoin:round}
.s{font:13.4px Roboto,sans-serif;fill:#2463c6}
.g{font:700 26px Lato,sans-serif;stroke:#fff;stroke-opacity:.75;stroke-width:3px;paint-order:stroke;stroke-linejoin:round}
</style>
<svg width="1377" height="600" viewBox="63 278 1377 600">
<defs>
<radialGradient id="heat"><stop offset="0" stop-color="#cf4360"/><stop offset=".14" stop-color="#d8553f"/><stop offset=".3" stop-color="#dba03c"/><stop offset=".46" stop-color="#cfd62f"/><stop offset=".62" stop-color="#8eee2c"/><stop offset=".75" stop-color="#74ee35" stop-opacity=".75"/><stop offset="1" stop-color="#74ee35" stop-opacity="0"/></radialGradient>
<g id="world">${world}</g>
<g id="dateline" fill="none" stroke="#86304f"><path d="M296 285V421" stroke-width="2" stroke-dasharray="9 3" stroke-opacity=".6"/><path d="M296 421 319.500 467V481L275 534 296.500 551" stroke-width="1.100" stroke-dasharray="8 3" stroke-opacity=".9"/><path d="M296.200 551V672M296.200 794V878" stroke-width="1.600" stroke-dasharray="9 3" stroke-opacity=".7"/><path d="M296 672.500H339V663.500H332.500V656H347L362.500 693.500H352V685.500H320L315 691 312 703V773L296 794" stroke-width="1.200" stroke-dasharray="8.500 3" stroke-opacity=".9"/></g>
</defs>
<rect x="63" y="278" width="1377" height="600" fill="#e5e3df"/><rect x="63" y="284" width="1377" height="594" fill="#8ab4f8"/>
<use href="#world" x="-768"/><use href="#world"/><use href="#world" x="768"/>
<use href="#dateline"/><use href="#dateline" x="768"/>
<path d="M66 668H1440" stroke="#86405f" stroke-opacity=".62" stroke-width="2" stroke-dasharray="8.900 3"/>
${labelSvg}${heat}
<text class="g" x="78.500" y="866" textLength="84.500" lengthAdjust="spacingAndGlyphs"><tspan fill="#4285f4">G</tspan><tspan fill="#ea4335">o</tspan><tspan fill="#fbbc04">o</tspan><tspan fill="#4285f4">g</tspan><tspan fill="#34a853">l</tspan><tspan fill="#ea4335">e</tspan></text>
</svg>
<map-type></map-type><map-pegman></map-pegman><map-zoom></map-zoom><map-credits></map-credits>`);
</script>
</body>
</html>
